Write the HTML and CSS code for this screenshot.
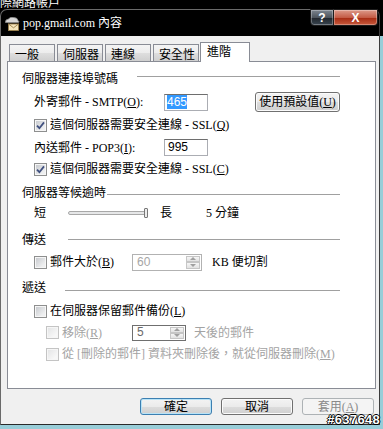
FILE: index.html
```html
<!DOCTYPE html>
<html lang="zh-Hant">
<head>
    <meta charset="UTF-8">
    <meta name="viewport" content="width=device-width, initial-scale=1.0">
    <title>pop.gmail.com 內容</title>
    <link rel="stylesheet" href="styles.css">
</head>
<body>
    <div class="parent-title"><span>網際網路帳戶</span></div>

    <div class="dialog">
        <div class="titlebar">
            <svg class="app-icon" width="16" height="16" viewBox="0 0 16 16">
                <path d="M1.5 6.5 Q1 3.5 4.5 3 Q6 0.8 9.5 1.5 Q13.5 1.5 14 4.5 Q15.5 5.5 14.5 6.5 Z" fill="#d8d8d8" stroke="#8c8c8c" stroke-width="0.8"/>
                <rect x="4.5" y="8" width="10" height="6.5" fill="#f4e6bd" stroke="#9a7f4c" stroke-width="0.9"/>
                <polyline points="4.5,8 9.5,11.8 14.5,8" fill="none" stroke="#9a7f4c" stroke-width="0.9"/>
            </svg>
            <span class="title-text">pop.gmail.com 內容</span>
            <div class="caption-buttons">
                <span class="cap-btn cap-help">?</span>
                <span class="cap-btn cap-close">X</span>
            </div>
        </div>

        <div class="client">
            <div class="tabs">
                <span class="tab">一般</span>
                <span class="tab">伺服器</span>
                <span class="tab">連線</span>
                <span class="tab">安全性</span>
                <span class="tab active">進階</span>
            </div>

            <div class="panel">
                <div class="group-title"><span>伺服器連接埠號碼</span><i class="rule rule-port"></i></div>

                <div class="row row-smtp mt-6">
                    <span class="field-label">外寄郵件 - SMTP(<u>O</u>):</span>
                    <span class="textbox"><span class="selection">465</span></span>
                    <button class="btn btn-default">使用預設值(<u>U</u>)</button>
                </div>
                <div class="row mt-6">
                    <span class="cb"><svg width="9" height="9" viewBox="0 0 9 9"><path d="M1 4.6 L3.4 7.2 L8 1.4" fill="none" stroke="#40507f" stroke-width="1.8"/></svg></span>
                    <span class="cb-label">這個伺服器需要安全連線 - SSL(<u>Q</u>)</span>
                </div>
                <div class="row row-pop mt-6">
                    <span class="field-label">內送郵件 - POP3(<u>I</u>):</span>
                    <span class="textbox">995</span>
                </div>
                <div class="row mt-5">
                    <span class="cb"><svg width="9" height="9" viewBox="0 0 9 9"><path d="M1 4.6 L3.4 7.2 L8 1.4" fill="none" stroke="#40507f" stroke-width="1.8"/></svg></span>
                    <span class="cb-label">這個伺服器需要安全連線 - SSL(<u>C</u>)</span>
                </div>

                <div class="group-title mt-10"><span>伺服器等候逾時</span><i class="rule rule-timeout"></i></div>

                <div class="row row-slider mt-5">
                    <span>短</span>
                    <span class="slider"><span class="slider-thumb"></span></span>
                    <span class="slider-max">長</span>
                    <span class="slider-value">5 分鐘</span>
                </div>

                <div class="group-title mt-13"><span>傳送</span><i class="rule rule-send"></i></div>

                <div class="row row-size mt-6">
                    <span class="cb"></span>
                    <span class="cb-label size-label">郵件大於(<u>B</u>)</span>
                    <span class="spinner spinner-off">
                        <span class="spinner-value">60</span>
                        <span class="spin"><span class="spin-up"></span><span class="spin-down"></span></span>
                    </span>
                    <span class="after-spin">KB 便切割</span>
                </div>

                <div class="group-title mt-10"><span>遞送</span><i class="rule rule-deliver"></i></div>

                <div class="row mt-9">
                    <span class="cb"></span>
                    <span class="cb-label">在伺服器保留郵件備份(<u>L</u>)</span>
                </div>
                <div class="row sub row-remove mt-6">
                    <span class="cb disabled"></span>
                    <span class="cb-label muted remove-label">移除(<u>R</u>)</span>
                    <span class="spinner spinner-days">
                        <span class="spinner-value">5</span>
                        <span class="spin"><span class="spin-up"></span><span class="spin-down"></span></span>
                    </span>
                    <span class="after-days muted">天後的郵件</span>
                </div>
                <div class="row sub mt-6">
                    <span class="cb disabled"></span>
                    <span class="cb-label muted">從 [刪除的郵件] 資料夾刪除後，就從伺服器刪除(<u>M</u>)</span>
                </div>
            </div>

            <div class="buttons">
                <button class="btn btn-focus">確定</button>
                <button class="btn">取消</button>
                <button class="btn" disabled>套用(<u>A</u>)</button>
            </div>
        </div>
    </div>

    <div class="watermark">#637648</div>
</body>
</html>
```

FILE: styles.css
```css
* {
    box-sizing: border-box;
}
body {
    margin: 0;
    width: 383px;
    height: 429px;
    overflow: hidden;
    position: relative;
    background: linear-gradient(#000 0, #000 36px, #98cdd8 36px);
    font-family: "Liberation Serif", "Noto Sans CJK TC", serif;
    font-size: 12px;
    line-height: 14px;
    color: #000;
}
u {
    text-decoration: underline;
}

/* window behind the dialog */
.parent-title {
    height: 9px;
    overflow: hidden;
    white-space: nowrap;
    color: #fff;
}
.parent-title span {
    display: block;
    margin: -5px 0 0 -12px;
    font-family: "Noto Sans CJK TC", sans-serif;
}

.dialog {
    width: 380px;
    height: 416px;
    display: flex;
    flex-direction: column;
    border: 1px solid #6a6a6a;
    border-right-color: #3c3c3c;
    border-bottom-color: #2a2a2a;
    border-radius: 7px 7px 0 0;
    background: #000;
}

/* title bar */
.titlebar {
    height: 26px;
    display: flex;
    align-items: center;
    padding-left: 3px;
    color: #fff;
}
.app-icon {
    margin-top: 2px;
}
.title-text {
    margin-left: 3px;
    font-family: "Liberation Serif", "Noto Sans CJK TC", serif;
}
.caption-buttons {
    display: flex;
    align-self: flex-start;
    margin: -1px 1px 0 auto;
}
.cap-btn {
    height: 17px;
    display: flex;
    align-items: center;
    justify-content: center;
    border: 1px solid #1c1c1c;
    box-shadow: inset 0 0 0 1px rgba(255, 255, 255, 0.3);
    color: #fff;
    font-family: "Liberation Sans", sans-serif;
    font-size: 12px;
    font-weight: bold;
}
.cap-help {
    width: 24px;
    border-radius: 0 0 0 4px;
    background: linear-gradient(#7d868f, #4d555d 50%, #1f252b 51%, #3a4550);
}
.cap-close {
    width: 44px;
    border-left: none;
    border-radius: 0 0 4px 0;
    background: linear-gradient(#dd9a8a, #c45c46 50%, #a52a12 51%, #c85a3c);
}

/* client area */
.client {
    flex: 1;
    background: #f0f0f0;
    padding: 6px 3px 0 6px;
}
.tabs {
    display: flex;
    align-items: flex-end;
    height: 19px;
    gap: 2px;
    padding-left: 2px;
}
.tab {
    width: 46px;
    height: 17px;
    padding: 2px 0 0 5px;
    border: 1px solid #898c95;
    border-bottom: none;
    background: linear-gradient(#f4f4f4, #ececec 50%, #dedede 51%, #cfcfcf);
    font-family: "Noto Sans CJK TC", sans-serif;
}
.tab.active {
    position: relative;
    width: 50px;
    height: 20px;
    margin: 0 0 -1px -1px;
    padding: 1px 0 0 6px;
    background: #fff;
}
.panel {
    height: 328px;
    border: 1px solid #898c95;
    background: #fff;
    padding: 10px 35px 0 14px;
}

.group-title {
    display: flex;
    align-items: center;
    height: 14px;
}
.rule {
    flex: 1;
    height: 1px;
    background: #a0a0a0;
}
.rule-port {
    margin: 0 0 6px 19px;
}
.rule-timeout {
    margin: 2px 0 0 1px;
}
.rule-send {
    margin: 0 0 1px 22px;
}
.rule-deliver {
    margin: 4px 0 0 19px;
}

.row {
    display: flex;
    align-items: center;
    height: 14px;
    margin-left: 12px;
    white-space: nowrap;
}
.row.sub {
    margin-left: 24px;
}
.row-smtp {
    height: 20px;
}
.row-pop {
    height: 19px;
}
.row-slider {
    height: 15px;
}
.row-size {
    height: 18px;
}
.row-remove {
    height: 17px;
}
.mt-5 { margin-top: 5px; }
.mt-6 { margin-top: 6px; }
.mt-9 { margin-top: 9px; }
.mt-10 { margin-top: 10px; }
.mt-13 { margin-top: 13px; }

.field-label {
    width: 130px;
}
.textbox {
    width: 44px;
    height: 17px;
    padding: 1px 2px;
    border: 1px solid #abadb3;
    border-top-color: #6e6e6e;
    background: #fff;
    font-family: "Liberation Sans", sans-serif;
    font-size: 12px;
    line-height: 13px;
}
.row-pop .textbox {
    padding-left: 3px;
}
.selection {
    background: #3399ff;
    color: #fff;
}

/* checkboxes */
.cb {
    width: 13px;
    height: 13px;
    flex: none;
    display: flex;
    align-items: center;
    justify-content: center;
    border: 1px solid #8e8f8f;
    background: linear-gradient(135deg, #c3c6cb, #eeeff0 75%);
    box-shadow: inset 0 0 0 1px #f6f6f6;
}
.cb.disabled {
    border-color: #c4c4c4;
    background: linear-gradient(135deg, #e2e3e4, #f7f7f7 75%);
}
.cb-label {
    margin-left: 3px;
}
.muted {
    color: #a3a3a3;
}
.size-label {
    width: 82px;
}
.remove-label {
    width: 70px;
}

/* slider */
.slider {
    width: 80px;
    height: 4px;
    margin-left: 22px;
    display: flex;
    align-items: center;
    justify-content: flex-end;
    border: 1px solid #a8a8a8;
    border-radius: 2px;
    background: #e6e7e8;
}
.slider-thumb {
    width: 4px;
    height: 10px;
    margin-right: -1px;
    border: 1px solid #787878;
    border-radius: 1px;
    background: #ededed;
}
.slider-max {
    margin-left: 12px;
}
.slider-value {
    margin-left: 34px;
}

/* spin boxes */
.spinner {
    display: flex;
    width: 70px;
    height: 17px;
    border: 1px solid #b2b2b2;
    background: #fff;
}
.spinner-days {
    width: 54px;
    height: 16px;
    border-color: #6f6f6f;
}
.spinner-value {
    flex: 1;
    padding: 1px 4px;
    color: #a6a6a6;
    font-family: "Liberation Sans", sans-serif;
    line-height: 13px;
}
.spinner-days .spinner-value {
    padding-top: 0;
    color: #6a6a6a;
}
.spin {
    width: 14px;
    display: flex;
    flex-direction: column;
    margin: 1px 1px 1px 0;
}
.spin span {
    flex: 1;
    display: flex;
    align-items: center;
    justify-content: center;
    border: 1px solid #c6c6c6;
    background: linear-gradient(#f6f6f6, #e2e2e2);
}
.spin-up::after {
    content: "";
    border: 3px solid transparent;
    border-top: none;
    border-bottom-color: #a0a0a0;
}
.spin-down::after {
    content: "";
    border: 3px solid transparent;
    border-bottom: none;
    border-top-color: #a0a0a0;
}
.after-spin {
    margin-left: 10px;
}
.after-days {
    margin-left: 8px;
}

/* push buttons */
.btn {
    width: 72px;
    height: 17px;
    padding: 0;
    border: 1px solid #707070;
    border-radius: 3px;
    background: linear-gradient(#f3f3f3, #ebebeb 50%, #dddddd 51%, #cfcfcf);
    box-shadow: inset 0 0 0 1px #fbfbfb;
    font-family: "Liberation Serif", "Noto Sans CJK TC", serif;
    font-size: 12px;
    line-height: 14px;
    color: #000;
}
.btn-default {
    width: 85px;
    height: 20px;
    margin-left: 47px;
}
.btn-focus {
    border-color: #3c7fb1;
    box-shadow: inset 0 0 0 1px #b8e3f7;
}
.btn:disabled {
    border-color: #adb2b5;
    background: #f4f4f4;
    box-shadow: none;
    color: #8a8a8a;
}
.buttons {
    display: flex;
    justify-content: flex-end;
    gap: 9px;
    margin-top: 9px;
    padding-right: 2px;
}

.watermark {
    position: absolute;
    right: 3px;
    bottom: 4px;
    color: #fff;
    font-family: "Liberation Sans", sans-serif;
    font-size: 13px;
    font-weight: bold;
    line-height: 10px;
    letter-spacing: 0.3px;
    text-shadow: 1px 0 0 #000, -1px 0 0 #000, 0 1px 0 #000, 0 -1px 0 #000;
}
```
